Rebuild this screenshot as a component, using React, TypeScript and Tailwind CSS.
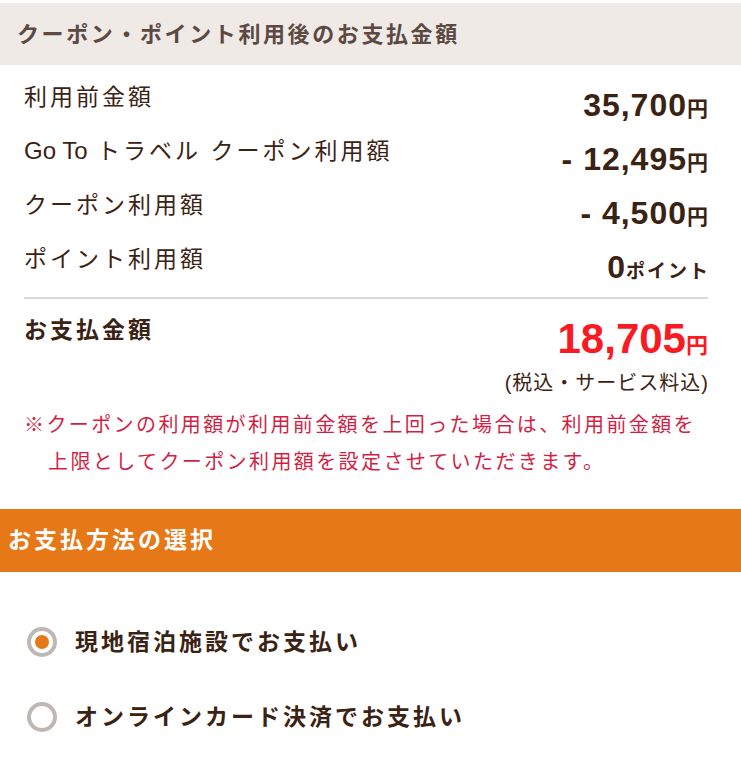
import React from 'react';

const rows = [
  { label: <>
      <span className="text-[24px] tracking-[0px]">Go To</span> トラベル クーポン利用額
    </>, key: 'goto', value: '- 12,495', unit: '円' },
  { label: 'クーポン利用額', key: 'coupon', value: '- 4,500', unit: '円' },
  { label: 'ポイント利用額', key: 'point', value: '0', unit: 'ポイント' },
];

const Radio = ({ checked }: { checked: boolean }) => (
  <span className="w-[30px] h-[30px] rounded-full border-[4px] border-[#bdb8b4] bg-white flex items-center justify-center shrink-0">
    {checked && <span className="w-[14px] h-[14px] rounded-full bg-[#e67817]"></span>}
  </span>
);

const App = () => {
  const allRows = [{ label: '利用前金額', key: 'before', value: '35,700', unit: '円' }, ...rows];

  return (
    <div
      className="w-[741px] min-h-[761px] bg-white text-[#3b2314]"
      style={{ fontFamily: '"Liberation Sans", "Noto Sans CJK JP", sans-serif' }}
    >
      <div className="h-[3px]"></div>

      {/* 合計セクション */}
      <div className="h-[62px] bg-[#efeae6] flex items-center pl-[17px]">
        <h2 className="text-[22px] font-bold text-[#5b4942] tracking-[2.6px]">クーポン・ポイント利用後のお支払金額</h2>
      </div>

      <div className="pl-[24px] pr-[33px] pt-[13px]">
        {allRows.map((r) => (
          <div key={r.key} className="h-[54px] flex items-center justify-between">
            <span className="text-[23px] font-normal tracking-[3px] -mt-[16px]">{r.label}</span>
            <span className="font-bold flex items-baseline">
              <span className="text-[32px] tracking-[1px]">{r.value}</span>
              <span className={r.unit === '円' ? 'text-[21px]' : 'text-[19px] tracking-[2px] -mr-[2px]'}>{r.unit}</span>
            </span>
          </div>
        ))}

        <div className="h-[2px] bg-[#dcd8d4] mt-[3px]"></div>

        <div className="flex justify-between pt-[14px]">
          <span className="text-[23px] font-bold tracking-[3px]">お支払金額</span>
          <div className="flex flex-col items-end">
            <span className="font-bold text-[#fa1a23] flex items-baseline mt-[2px] leading-[48px]">
              <span className="text-[42px]">18,705</span>
              <span className="text-[22px]">円</span>
            </span>
            <span className="text-[20px] leading-[26px] tracking-[1px] -mr-[1px]">(税込・サービス料込)</span>
          </div>
        </div>

        <p className="text-[20px] text-[#d41f45] leading-[37px] mt-[11px] pl-[24px] -indent-[24px] tracking-[2.4px]">
          ※クーポンの利用額が利用前金額を上回った場合は、利用前金額を上限としてクーポン利用額を設定させていただきます。
        </p>
      </div>

      {/* 支払方法 */}
      <div className="mt-[28px] h-[63px] bg-[#e67817] flex items-center pl-[8px]">
        <h2 className="text-[23px] font-bold text-white tracking-[3px]">お支払方法の選択</h2>
      </div>

      <div className="pl-[27px] pt-[55px] flex flex-col gap-[45px]">
        <label className="flex items-center gap-[18px]">
          <Radio checked />
          <span className="text-[23px] leading-[30px] font-bold tracking-[3px]">現地宿泊施設でお支払い</span>
        </label>
        <label className="flex items-center gap-[18px]">
          <Radio checked={false} />
          <span className="text-[23px] leading-[30px] font-bold tracking-[3px]">オンラインカード決済でお支払い</span>
        </label>
      </div>
    </div>
  );
};

export default App;
